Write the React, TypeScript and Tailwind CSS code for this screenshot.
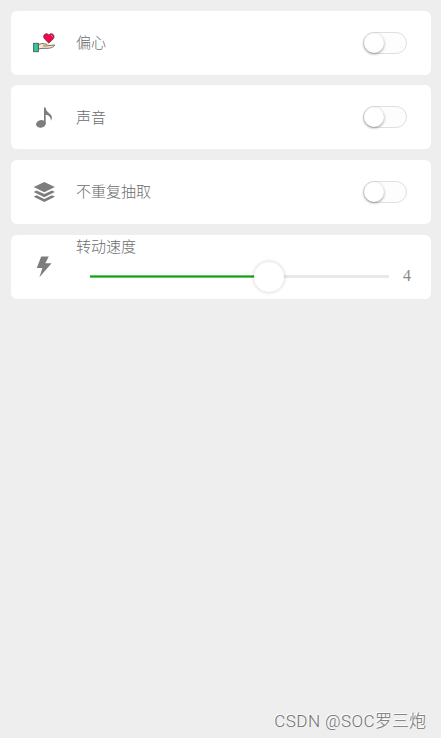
import React from "react";

const HeartHandIcon: React.FC = () => (
  <svg width="24" height="22" viewBox="0 0 24 22">
    <path
      d="M16.8 11.2 L12.4 6.8 C11.1 5.2 11.5 2.2 14 1.8 C15.4 1.6 16.3 2.2 16.8 3.1 C17.4 2.1 18.4 1.6 19.7 1.8 C22.1 2.2 22.7 5 21.3 6.8 Z"
      fill="#f4064d"
      stroke="#6b3440"
      strokeWidth="0.8"
    />
    <path d="M19.3 3.3 L20.5 4.5" stroke="#ffb3c8" strokeWidth="1" />
    <path
      d="M6.5 12.6 L9.8 11.5 L14.7 12.2 L15.8 13.6 L22.7 13 C22.7 14.7 19 16.1 16 16.3 L10 16.4 L6.5 17 Z"
      fill="#fbe5c8"
      stroke="#66605a"
      strokeWidth="0.9"
    />
    <path d="M11 14 H15.5" stroke="#66605a" strokeWidth="0.8" />
    <rect x="1.6" y="11.3" width="4.8" height="8.4" fill="#34c49e" stroke="#40635b" strokeWidth="0.9" />
  </svg>
);

const NoteIcon: React.FC = () => (
  <svg width="24" height="22" viewBox="0 0 24 22" fill="#7d7d7d">
    <ellipse cx="8.9" cy="17.9" rx="4.9" ry="3.8" transform="rotate(-14 8.9 17.9)" />
    <path d="M12 1.4 H13.6 C14 5.4 16.8 6.4 18.8 8.7 C20.4 10.8 20.1 12.7 18.9 14.7 C18.9 10.8 16.7 9 13.7 8.7 V18 H12 Z" />
  </svg>
);

const LayersIcon: React.FC = () => (
  <svg width="24" height="22" viewBox="0 0 24 22" fill="#7d7d7d">
    <path d="M12.3 1 L22.9 6.1 L12.3 11.2 L1.7 6.1 Z" />
    <path d="M1.7 11 L4.6 9.5 L12.3 13.1 L20 9.5 L22.9 11 L12.3 16.2 Z" />
    <path d="M1.7 15.8 L4.6 14.3 L12.3 17.9 L20 14.3 L22.9 15.8 L12.3 21 Z" />
  </svg>
);

const BoltIcon: React.FC = () => (
  <svg width="24" height="22" viewBox="0 0 24 22" fill="#7d7d7d">
    <path d="M9.2 0.4 H16.8 L13.3 7.3 H19.6 L7.4 21.2 L10.4 12 H4.8 Z" />
  </svg>
);

const Toggle: React.FC = () => (
  <button
    role="switch"
    aria-checked="false"
    className="flex w-11 h-[22px] items-center rounded-full border border-[#dfdfdf] bg-[#fdfdfd]"
  >
    <span className="size-5 rounded-full bg-white shadow-[0_1px_3px_rgba(0,0,0,0.4)]" />
  </button>
);

const Card: React.FC<{ icon: React.ReactNode; children: React.ReactNode }> = ({
  icon,
  children,
}) => (
  <div className="flex h-16 items-center rounded-md bg-white pl-[21px]">
    {icon}
    <div className="ml-5 flex h-full flex-1">{children}</div>
  </div>
);

const options = [
  { label: "偏心", icon: <HeartHandIcon /> },
  { label: "声音", icon: <NoteIcon /> },
  { label: "不重复抽取", icon: <LayersIcon /> },
];

const speed = 4;
const maxSpeed = 6;

export default function App() {
  return (
    <div className="h-[739px] w-[442px] bg-white pr-px pb-px font-['Liberation_Serif','Noto_Sans_CJK_SC',serif]">
      <div className="flex h-full flex-col justify-between bg-[#eeeeee] pt-[10.6px] pr-[10px] pl-[11px] text-[15px] font-light text-[#6c6c6c]">
        <div className="flex flex-col gap-[10.7px]">
          {options.map(({ label, icon }) => (
            <Card key={label} icon={icon}>
              <div className="flex flex-1 items-center justify-between pr-6">
                <span className="pb-px font-['Noto_Sans_CJK_SC',sans-serif]">{label}</span>
                <Toggle />
              </div>
            </Card>
          ))}
          <Card icon={<BoltIcon />}>
            <div className="flex flex-1 flex-col">
              <span className="h-6 font-['Noto_Sans_CJK_SC',sans-serif] leading-[22px]">
                转动速度
              </span>
              <div className="flex h-9 items-center pl-3.5">
                <div className="relative h-[3px] w-[299px] bg-[#e9e9e9]">
                  <div
                    className="h-full border-y border-[#67c967] bg-[#179b16]"
                    style={{ width: `${((speed - 1) / (maxSpeed - 1)) * 100}%` }}
                  />
                  <div
                    className="absolute top-1/2 size-[30px] -translate-1/2 rounded-full bg-white shadow-[0_0_4px_rgba(0,0,0,0.2)]"
                    style={{ left: `${((speed - 1) / (maxSpeed - 1)) * 100}%` }}
                  />
                </div>
                <span className="ml-3.5 pb-px text-base text-[#888888]">{speed}</span>
              </div>
            </div>
          </Card>
        </div>
        <div className="pr-[5px] pb-[3px] text-right font-['Roboto','Noto_Sans_CJK_SC',sans-serif] text-[17px] leading-7 text-[#707070] [text-shadow:-1px_-1px_0_#ffffff]">
          <span className="tracking-[0.45px]">CSDN @SOC</span>罗三炮
        </div>
      </div>
    </div>
  );
}
